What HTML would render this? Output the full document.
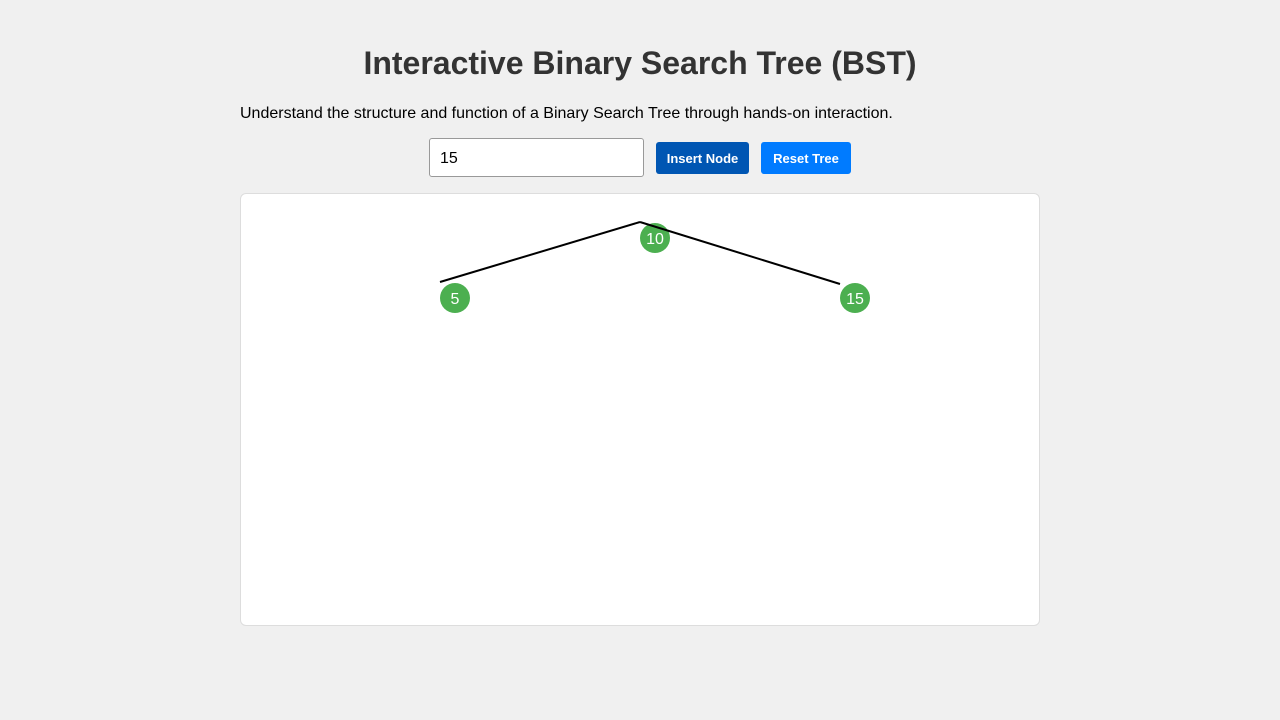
<!DOCTYPE html>
<html><head><style>
body{margin:0;background:#f0f0f0;font-family:"Liberation Sans",Arial,sans-serif;width:1280px;height:720px;position:relative;overflow:hidden}
h1{position:absolute;top:45px;left:0;width:1280px;text-align:center;margin:0;font-size:32px;color:#333;font-weight:bold}
p{position:absolute;top:105px;left:240px;margin:0;font-size:16px;color:#000}
input{position:absolute;left:429px;top:138px;width:215px;height:39px;box-sizing:border-box;border:1px solid #999;border-radius:3px;padding:2px 10px 0;font-size:16px;font-family:inherit;background:#fff}
.b{position:absolute;top:142px;height:32px;border-radius:3px;color:#fff;font-size:13px;font-weight:bold;line-height:34px;text-align:center}
.box{position:absolute;left:240px;top:193px;width:798px;height:431px;background:#fff;border:1px solid #ddd;border-radius:6px}
svg{position:absolute;left:0;top:0}
</style></head><body>
<h1>Interactive Binary Search Tree (BST)</h1>
<p>Understand the structure and function of a Binary Search Tree through hands-on interaction.</p>
<input value="15">
<div class="b" style="left:656px;width:93px;background:#0056b3">Insert Node</div>
<div class="b" style="left:761px;width:90px;background:#007bff">Reset Tree</div>
<div class="box"></div>
<svg width="1280" height="720" font-family="Liberation Sans,Arial,sans-serif" font-size="16">
<g fill="#4caf50"><circle cx="655" cy="238" r="15"/><circle cx="455" cy="298" r="15"/><circle cx="855" cy="298" r="15"/></g>
<g fill="#fff" text-anchor="middle"><text x="655" y="244">10</text><text x="455" y="304">5</text><text x="855" y="304">15</text></g>
<g stroke="#000" stroke-width="2"><line x1="440" y1="282" x2="640" y2="222"/><line x1="640" y1="222" x2="840" y2="284"/></g>
</svg>
</body></html>
